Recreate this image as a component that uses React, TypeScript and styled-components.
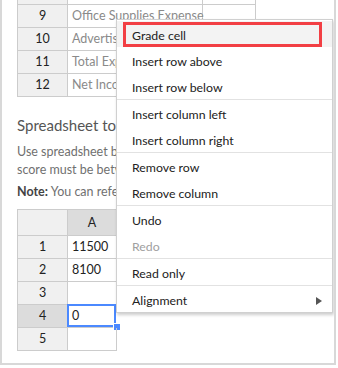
import styled, { createGlobalStyle } from 'styled-components';

const GlobalStyle = createGlobalStyle`
  html, body {
    margin: 0;
    padding: 0;
    background: #ffffff;
  }
  body {
    font-family: Lato, 'Liberation Sans', sans-serif;
  }
`;

const topRows = [
  { num: '9', label: 'Office Supplies Expense' },
  { num: '10', label: 'Advertising Expense' },
  { num: '11', label: 'Total Expenses' },
  { num: '12', label: 'Net Income' },
];

const gridRows = [
  { num: '1', value: '11500' },
  { num: '2', value: '8100' },
  { num: '3', value: '' },
  { num: '4', value: '0', selected: true },
  { num: '5', value: '' },
];

const menuGroups = [
  [{ label: 'Grade cell', active: true }, { label: 'Insert row above' }, { label: 'Insert row below' }],
  [{ label: 'Insert column left' }, { label: 'Insert column right' }],
  [{ label: 'Remove row' }, { label: 'Remove column' }],
  [{ label: 'Undo' }, { label: 'Redo', disabled: true }],
  [{ label: 'Read only' }],
  [{ label: 'Alignment', submenu: true }],
];

function App() {
  return (
    <>
      <GlobalStyle />
      <Frame>
        <Sheet $cols="50px 135px 53px">
          <RowHead $h={5} />
          <Cell $h={5} />
          <Cell $h={5} />
          {topRows.map((r) => (
            <Row key={r.num}>
              <RowHead>{r.num}</RowHead>
              <Cell $muted>{r.label}</Cell>
              <Cell />
            </Row>
          ))}
        </Sheet>

        <TextBlock>
          <Heading>Spreadsheet to calculate grade</Heading>
          <Para>Use spreadsheet below to calculate the final grade. The</Para>
          <Para>score must be between 0 and 100.</Para>
          <Note>
            <b>Note:</b> You can reference cells of this sheet.
          </Note>
        </TextBlock>

        <Sheet $cols="50px 49px" $gap>
          <ColHead $h={26} />
          <ColHead $h={26} $active>A</ColHead>
          {gridRows.map((r) => (
            <Row key={r.num}>
              <RowHead $active={r.selected}>{r.num}</RowHead>
              <Cell $selected={r.selected}>
                {r.value}
                {r.selected && <Handle />}
              </Cell>
            </Row>
          ))}
        </Sheet>

        <Menu>
          {menuGroups.map((group, gi) => (
            <Group key={gi}>
              {group.map((item) => (
                <Item key={item.label} $active={item.active} $disabled={item.disabled}>
                  {item.label}
                  {item.submenu && <Arrow />}
                </Item>
              ))}
            </Group>
          ))}
        </Menu>
      </Frame>
    </>
  );
}

const Frame = styled.div`
  position: relative;
  box-sizing: border-box;
  width: 336px;
  height: 365px;
  border: 2px solid #d8d8d8;
  border-top: none;
  padding-left: 15px;
  overflow: hidden;
  background: #fff;
`;

const Sheet = styled.div<{ $cols: string; $gap?: boolean }>`
  display: grid;
  grid-template-columns: ${(p) => p.$cols};
  width: max-content;
  border-left: 1px solid #cccccc;
  border-top: ${(p) => (p.$gap ? '1px solid #cccccc' : 'none')};
  margin-top: ${(p) => (p.$gap ? '8px' : '0')};
  font-size: 12.5px;
`;

const Row = styled.div`
  display: contents;
`;

const Cell = styled.div<{ $h?: number; $muted?: boolean; $selected?: boolean }>`
  position: relative;
  box-sizing: border-box;
  height: ${(p) => p.$h ?? 23}px;
  line-height: 22px;
  padding: 0 4px;
  border-right: 1px solid #cccccc;
  border-bottom: 1px solid #cccccc;
  color: ${(p) => (p.$muted ? '#8a8a8a' : '#222')};
  white-space: nowrap;
  ${(p) =>
    p.$selected &&
    `
    box-shadow: inset 0 0 0 2px #4b89ff;
    margin: -1px 0 0 -1px;
    padding-left: 5px;
    height: 24px;
    line-height: 24px;
    border-right-color: transparent;
  `}
`;

const RowHead = styled.div<{ $h?: number; $active?: boolean }>`
  box-sizing: border-box;
  height: ${(p) => p.$h ?? 23}px;
  line-height: 22px;
  text-align: center;
  color: #222;
  background: ${(p) => (p.$active ? '#dcdcdc' : '#f0f0f0')};
  border-right: 1px solid #cccccc;
  border-bottom: 1px solid #cccccc;
  overflow: hidden;
`;

const ColHead = styled(RowHead)`
  line-height: 25px;
`;

const Handle = styled.span`
  position: absolute;
  right: -4px;
  bottom: -3px;
  width: 6px;
  height: 6px;
  background: #4b89ff;
  border: 1px solid #fff;
  border-right: none;
  border-bottom: none;
`;

const TextBlock = styled.div`
  width: 99px;
  overflow: hidden;
`;

const Heading = styled.div`
  margin-top: 17px;
  font-size: 15px;
  line-height: 22px;
  color: #555;
  white-space: nowrap;
`;

const Para = styled.div`
  font-size: 12.5px;
  line-height: 18px;
  color: #707070;
  white-space: nowrap;
  &:nth-of-type(2) {
    margin-top: 7px;
  }
`;

const Note = styled(Para)`
  margin-top: 4px;
  b {
    color: #444;
  }
`;

const Menu = styled.div`
  position: absolute;
  left: 114px;
  top: 19px;
  width: 217px;
  box-sizing: border-box;
  padding: 1px 0 0;
  background: #fff;
  border: 1px solid #d0d0d0;
  box-shadow: 1px 2px 3px rgba(0, 0, 0, 0.2);
  font-size: 12.3px;
  color: #222;
`;

const Group = styled.div`
  & + & {
    border-top: 1px solid #e2e2e2;
  }
`;

const Item = styled.div<{ $active?: boolean; $disabled?: boolean }>`
  position: relative;
  box-sizing: border-box;
  height: 26px;
  padding: 2px 0 0 15px;
  line-height: 25px;
  color: ${(p) => (p.$disabled ? '#a0a0a0' : '#222')};
  background: ${(p) => (p.$active ? '#f3f3f3' : 'transparent')};
  ${(p) =>
    p.$active &&
    `
    &::after {
      content: '';
      position: absolute;
      left: 6px;
      right: 10px;
      top: 1px;
      bottom: 0;
      border: 3px solid #f23f44;
    }
  `}
`;

const Arrow = styled.span`
  position: absolute;
  right: 10px;
  top: 11px;
  width: 0;
  height: 0;
  border-top: 4px solid transparent;
  border-bottom: 4px solid transparent;
  border-left: 6px solid #555;
`;

export default App;
